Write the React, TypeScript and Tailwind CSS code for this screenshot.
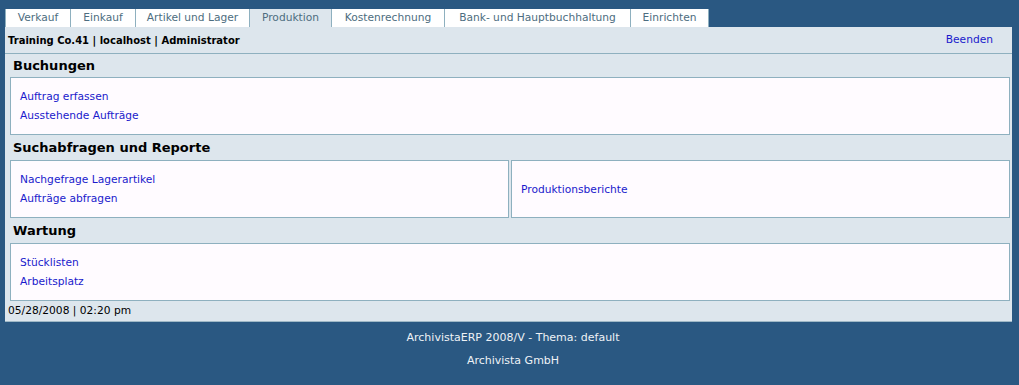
import React from "react";

const tabs = [
  { label: "Verkauf", w: "w-[65px]" },
  { label: "Einkauf", w: "w-[65px]" },
  { label: "Artikel und Lager", w: "w-[114px]" },
  { label: "Produktion", w: "w-[82px]", active: true },
  { label: "Kostenrechnung", w: "w-[113px]" },
  { label: "Bank- und Hauptbuchhaltung", w: "w-[186px]" },
  { label: "Einrichten", w: "w-[79px]", last: true },
];

function Heading({ children, h }: { children: React.ReactNode; h: string }) {
  return (
    <div className={`${h} flex items-center pl-[3px] text-[13px] font-bold text-black`}>
      {children}
    </div>
  );
}

function Box({ links, center }: { links: string[]; center?: boolean }) {
  return (
    <div
      className={`flex-1 h-[58px] bg-[#fffbff] border border-[#8eb0bf] px-[9px] flex flex-col ${
        center ? "justify-center" : "pt-[9px]"
      }`}
    >
      {links.map((l) => (
        <a key={l} className="block leading-[19px] text-[10.67px] text-[#1a1acc] cursor-pointer">
          {l}
        </a>
      ))}
    </div>
  );
}

export default function App() {
  return (
    <div
      className="w-[1019px] h-[385px] bg-[#2a5882] pt-[9px] pl-[5px] pr-[7px]"
      style={{ fontFamily: '"DejaVu Sans", sans-serif' }}
    >
      {/* Tabs */}
      <div className="flex h-[18px]">
        {tabs.map((t) => (
          <div
            key={t.label}
            className={`${t.w} h-[18px] flex items-center justify-center text-[10.67px] text-[#4d6d80] border-l border-[#8eb0bf] ${
              t.last ? "border-r" : ""
            } ${t.active ? "bg-[#dde6ed]" : "bg-white"}`}
          >
            {t.label}
          </div>
        ))}
      </div>

      {/* Panel */}
      <div className="bg-[#dde6ed] border-b border-[#9fb8c6]">
        <div className="h-[27px] flex items-center justify-between border-b border-[#8eb0bf] pl-[3px] pr-[19px]">
          <span className="font-bold text-black text-[10px]">Training Co.41 | localhost | Administrator</span>
          <a className="text-[#1a1acc] cursor-pointer text-[10.67px]">Beenden</a>
        </div>

        <div className="pl-[5px] pr-[2px]">
          <Heading h="h-[23px]">Buchungen</Heading>
          <div className="flex">
            <Box links={["Auftrag erfassen", "Ausstehende Aufträge"]} />
          </div>

          <Heading h="h-[25px]">Suchabfragen und Reporte</Heading>
          <div className="flex gap-[2px]">
            <Box links={["Nachgefrage Lagerartikel", "Aufträge abfragen"]} />
            <Box links={["Produktionsberichte"]} center />
          </div>

          <Heading h="h-[25px]">Wartung</Heading>
          <div className="flex">
            <Box links={["Stücklisten", "Arbeitsplatz"]} />
          </div>
        </div>

        <div className="h-[20px] flex items-center pl-[3px] text-[10.67px] text-black">
          05/28/2008 | 02:20 pm
        </div>
      </div>

      {/* Footer */}
      <div className="text-center text-[11px] text-[#eef2f6] pt-[8px] pl-[9px]">
        <div className="leading-[16px]">ArchivistaERP 2008/V - Thema: default</div>
        <div className="leading-[16px] mt-[7px]">Archivista GmbH</div>
      </div>
    </div>
  );
}
